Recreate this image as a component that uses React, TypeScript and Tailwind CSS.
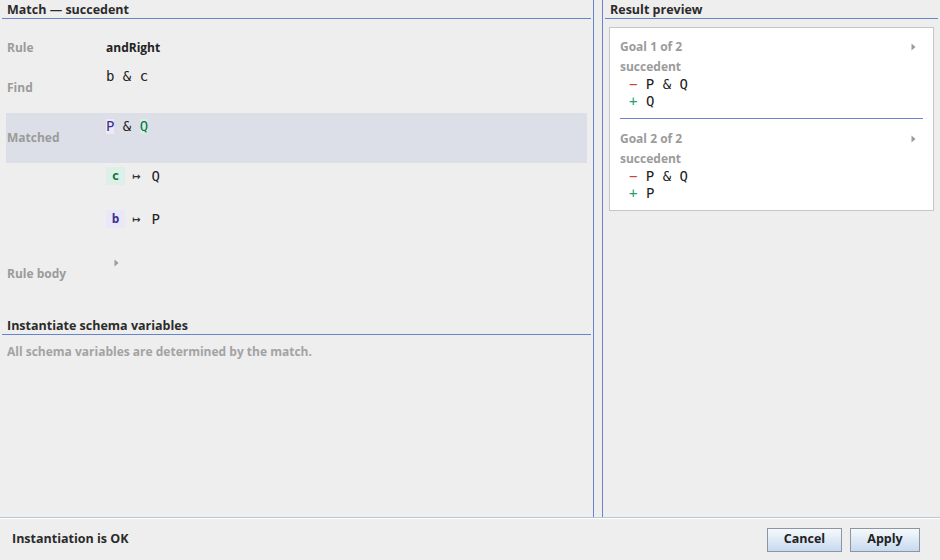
import React from "react";

const ui = "font-['Open_Sans',_'DejaVu_Sans',_sans-serif]";
const mono = "font-['DejaVu_Sans_Mono',_'Liberation_Mono',_monospace]";

function Caret() {
  return (
    <svg width="5" height="8" viewBox="0 0 5 8" className="shrink-0">
      <path d="M0.5 0.5 L4.5 4 L0.5 7.5 Z" fill="#9b9b9b" />
    </svg>
  );
}

function SectionTitle({ children }: { children: React.ReactNode }) {
  return (
    <div className="mx-[2px] h-[19px] border-b border-[#6784cd] pl-[5px] pt-[2px] text-[12.5px] leading-[16px] font-bold text-[#2b2b2b]">
      {children}
    </div>
  );
}

function Label({ children }: { children: React.ReactNode }) {
  return (
    <div className="w-[100px] shrink-0 self-center pl-px text-[12px] font-bold text-[#9b9b9b]">
      {children}
    </div>
  );
}

function Chip({ text, tone }: { text: string; tone: "b" | "c" }) {
  const cls =
    tone === "b" ? "bg-[#e9e7f8] text-[#3a2f8e]" : "bg-[#dcf0e7] text-[#16704e]";
  return (
    <span className={`${mono} ${cls} flex h-[18px] w-[19px] items-center justify-center text-[12.5px] font-bold`}>
      {text}
    </span>
  );
}

function Mapping({ from, to, tone }: { from: string; to: string; tone: "b" | "c" }) {
  return (
    <div className="flex h-[43px] items-start pl-[100px] pt-[4px]">
      <div className="flex h-[18px] items-center">
        <Chip text={from} tone={tone} />
        <span className="ml-[7px] text-[10px] font-bold text-[#333] font-['DejaVu_Sans',_sans-serif]">↦</span>
        <span className={`${mono} ml-[11px] text-[14px] text-[#222]`}>{to}</span>
      </div>
    </div>
  );
}

function Goal({ n, added }: { n: number; added: string }) {
  return (
    <div>
      <div className="flex h-[16px] items-center justify-between pr-[17px]">
        <span className="text-[12px] font-bold text-[#9b9b9b]">Goal {n} of 2</span>
        <Caret />
      </div>
      <div className="mt-[4px] text-[12px] leading-[16px] font-bold text-[#9b9b9b]">succedent</div>
      <div className={`${mono} mt-px pl-[9px] text-[14px] leading-[17px] text-[#222] whitespace-pre`}>
        <span className="text-[#c9433a]">−</span> P &amp; Q
      </div>
      <div className={`${mono} pl-[9px] text-[14px] leading-[17px] text-[#222] whitespace-pre`}>
        <span className="text-[#2a9d6c]">+</span> {added}
      </div>
    </div>
  );
}

export default function App() {
  return (
    <div className={`${ui} flex h-[560px] w-[940px] flex-col overflow-hidden bg-[#eeeeee]`}>
      <div className="flex h-[517px]">
        {/* left: match details */}
        <div className="w-[594px] shrink-0 border-r border-[#6784cd]">
          <SectionTitle>Match — succedent</SectionTitle>

          <div className="ml-[6px] mr-[6px] mt-[13px]">
            <div className="flex h-[31px] items-center">
              <Label>Rule</Label>
              <span className="text-[12px] font-bold text-[#222]">andRight</span>
            </div>

            <div className="flex h-[50px]">
              <Label>Find</Label>
              <div className={`${mono} self-start pt-[5px] text-[14px] leading-[16px] text-[#222] whitespace-pre`}>
                b &amp; c
              </div>
            </div>

            <div className="flex h-[50px] bg-[#dcdfe7]">
              <Label>Matched</Label>
              <div className={`${mono} flex self-start pt-[6px] text-[14px] leading-[15px] text-[#222] whitespace-pre`}>
                <span className="bg-[#eceaf9] text-[#3a2f8e]">P</span>
                <span> &amp; </span>
                <span className="bg-[#d5eee3] text-[#16704e]">Q</span>
              </div>
            </div>

            <Mapping from="c" to="Q" tone="c" />
            <Mapping from="b" to="P" tone="b" />

            <div className="flex h-[50px]">
              <Label>Rule body</Label>
              <div className="self-start pl-[8px] pt-[10px]">
                <Caret />
              </div>
            </div>
          </div>

          <div className="mt-[17px]">
            <SectionTitle>Instantiate schema variables</SectionTitle>
            <div className="pl-[7px] pt-[9px] text-[12px] leading-[16px] font-bold text-[#a3a3a3]">
              All schema variables are determined by the match.
            </div>
          </div>
        </div>

        <div className="w-[8px] shrink-0" />

        {/* right: preview of resulting goals */}
        <div className="flex-1 border-l border-[#6784cd]">
          <SectionTitle>Result preview</SectionTitle>
          <div className="ml-[6px] mr-[6px] mt-[8px] border border-[#c6c6c6] bg-white pb-[8px] pl-[10px] pt-[11px]">
            <Goal n={1} added="Q" />
            <div className="mr-[10px] mt-[8px] mb-[12px] h-px bg-[#6784cd]" />
            <Goal n={2} added="P" />
          </div>
        </div>
      </div>

      <div className="h-px bg-[#b8c7d7]" />
      <div className="h-px bg-white" />

      <div className="flex flex-1 items-center justify-between pl-[12px] pr-[20px]">
        <span className="text-[12.5px] font-bold text-[#2b2b2b]">Instantiation is OK</span>
        <div className="flex gap-[8px]">
          <button className="h-[24px] w-[75px] border border-[#8c96a2] bg-gradient-to-b from-[#f6f9fc] to-[#c6daef] text-[12.5px] font-bold text-[#222]">
            Cancel
          </button>
          <button className="h-[24px] w-[70px] border border-[#8c96a2] bg-gradient-to-b from-[#f6f9fc] to-[#c6daef] text-[12.5px] font-bold text-[#222]">
            Apply
          </button>
        </div>
      </div>
    </div>
  );
}
